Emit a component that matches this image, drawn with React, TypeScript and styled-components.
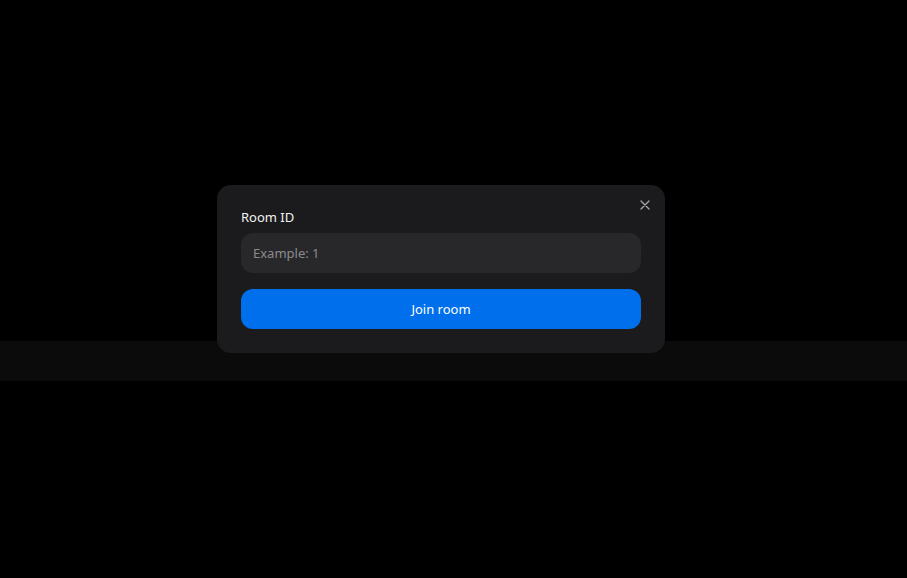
import React, { useState } from 'react';
import styled, { createGlobalStyle } from 'styled-components';

const GlobalStyle = createGlobalStyle`
  html, body {
    margin: 0;
    padding: 0;
    background: #000000;
    font-family: "Noto Sans", Inter, "Liberation Sans", sans-serif;
  }
  * { box-sizing: border-box; }
`;

const Page = styled.div`
  position: relative;
  width: 100%;
  height: 578px;
  background: #000;
  display: flex;
  flex-direction: column;
  overflow: hidden;
`;

const Band = styled.div`
  margin-top: 341px;
  height: 40px;
  width: 100%;
  background: #0b0b0b;
`;

const Modal = styled.div`
  position: absolute;
  top: 185px;
  left: 217px;
  width: 448px;
  padding: 24px;
  background: #1b1b1d;
  border-radius: 14px;
  display: flex;
  flex-direction: column;
`;

const CloseButton = styled.button`
  position: absolute;
  top: 12px;
  right: 12px;
  width: 16px;
  height: 16px;
  padding: 0;
  border: none;
  background: transparent;
  color: #a8a8ac;
  display: flex;
  align-items: center;
  justify-content: center;
  cursor: pointer;
`;

const Label = styled.label`
  font-size: 13px;
  font-weight: 400;
  color: #f2f2f2;
  line-height: 16px;
  margin-bottom: 8px;
`;

const Input = styled.input`
  height: 40px;
  width: 100%;
  border: none;
  outline: none;
  border-radius: 12px;
  background: #28282a;
  color: #f2f2f2;
  padding: 0 12px;
  font-family: inherit;
  font-size: 13px;
  &::placeholder {
    color: #8b8b8f;
  }
`;

const JoinButton = styled.button`
  margin-top: 16px;
  height: 40px;
  width: 100%;
  border: none;
  border-radius: 12px;
  background: #006fec;
  color: #ffffff;
  font-family: inherit;
  font-size: 13px;
  font-weight: 400;
  cursor: pointer;
`;

const App = () => {
    const [roomId, setRoomId] = useState('');

    return (
        <>
            <GlobalStyle />
            <Page>
                <Band />
                <Modal>
                    <CloseButton aria-label="Close">
                        <svg width="10" height="10" viewBox="0 0 10 10" fill="none">
                            <path d="M1 1L9 9M9 1L1 9" stroke="currentColor" strokeWidth="1.3" strokeLinecap="round" />
                        </svg>
                    </CloseButton>
                    <Label htmlFor="room-id">Room ID</Label>
                    <Input
                        id="room-id"
                        placeholder="Example: 1"
                        value={roomId}
                        onChange={(e) => setRoomId(e.target.value)}
                    />
                    <JoinButton>Join room</JoinButton>
                </Modal>
            </Page>
        </>
    );
};

export default App;
